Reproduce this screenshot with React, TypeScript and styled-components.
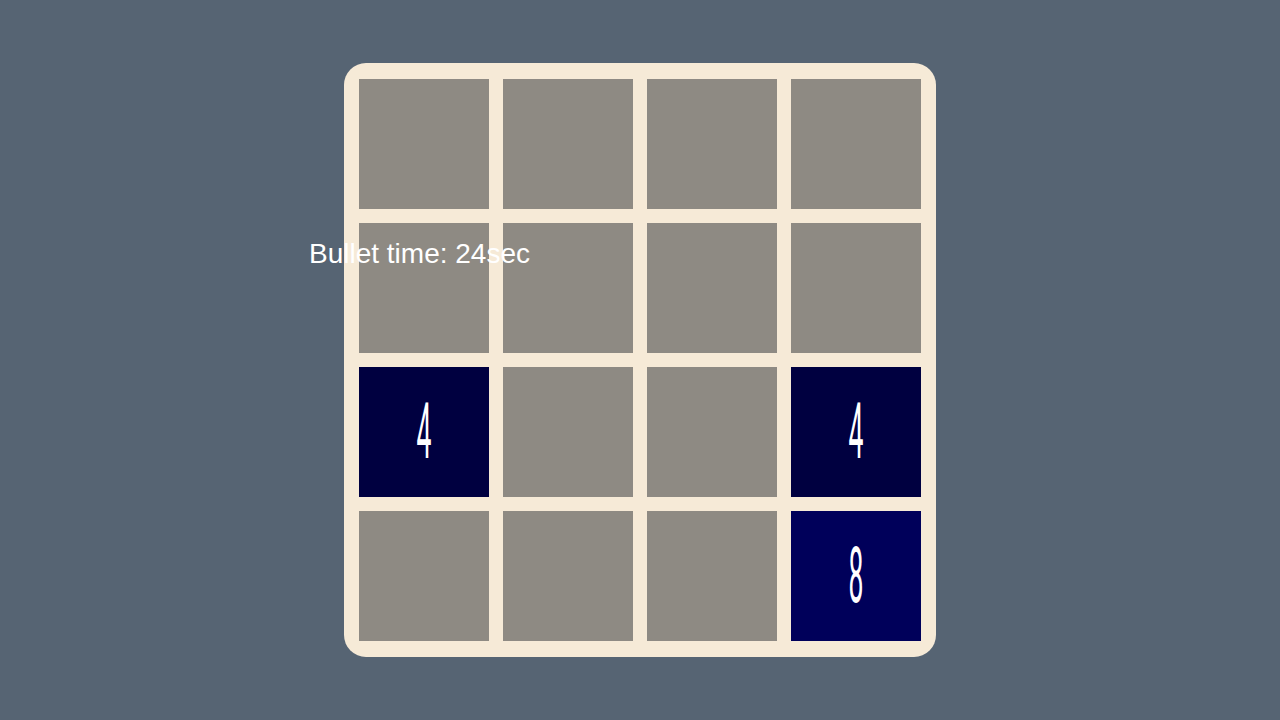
import styled, { createGlobalStyle } from "styled-components";

const GlobalStyle = createGlobalStyle`
  html, body {
    margin: 0;
    padding: 0;
    background: #566473;
    font-family: "Liberation Sans", Arial, sans-serif;
  }
`;

const Page = styled.div`
  position: relative;
  width: 1280px;
  height: 720px;
  display: flex;
  justify-content: center;
  padding-top: 63px;
  box-sizing: border-box;
`;

const Board = styled.div`
  display: grid;
  grid-template-columns: repeat(4, 130px);
  grid-template-rows: repeat(4, 130px);
  gap: 14px;
  padding: 16px 15px;
  height: fit-content;
  background: #f6ead7;
  border-radius: 22px;
`;

const tileColors: Record<number, string> = {
  4: "#000040",
  8: "#00005a",
};

const Cell = styled.div<{ $value: number }>`
  display: flex;
  align-items: center;
  justify-content: center;
  background: ${(p) => (p.$value ? tileColors[p.$value] ?? "#000070" : "#8e8a83")};
`;

const Digit = styled.span`
  color: #ffffff;
  font-family: Roboto, "Liberation Sans", sans-serif;
  font-weight: 400;
  font-size: 78px;
  line-height: 1;
  transform: scaleX(0.34);
`;

const BulletTime = styled.div`
  position: absolute;
  left: 309px;
  top: 238px;
  color: #ffffff;
  font-size: 28px;
  line-height: 32px;
`;

const grid = [
  [0, 0, 0, 0],
  [0, 0, 0, 0],
  [4, 0, 0, 4],
  [0, 0, 0, 8],
];

export default function App() {
  return (
    <>
      <GlobalStyle />
      <Page>
        <Board>
          {grid.flat().map((v, i) => (
            <Cell key={i} $value={v}>
              {v ? <Digit>{v}</Digit> : null}
            </Cell>
          ))}
        </Board>
        <BulletTime>Bullet time: 24sec</BulletTime>
      </Page>
    </>
  );
}
